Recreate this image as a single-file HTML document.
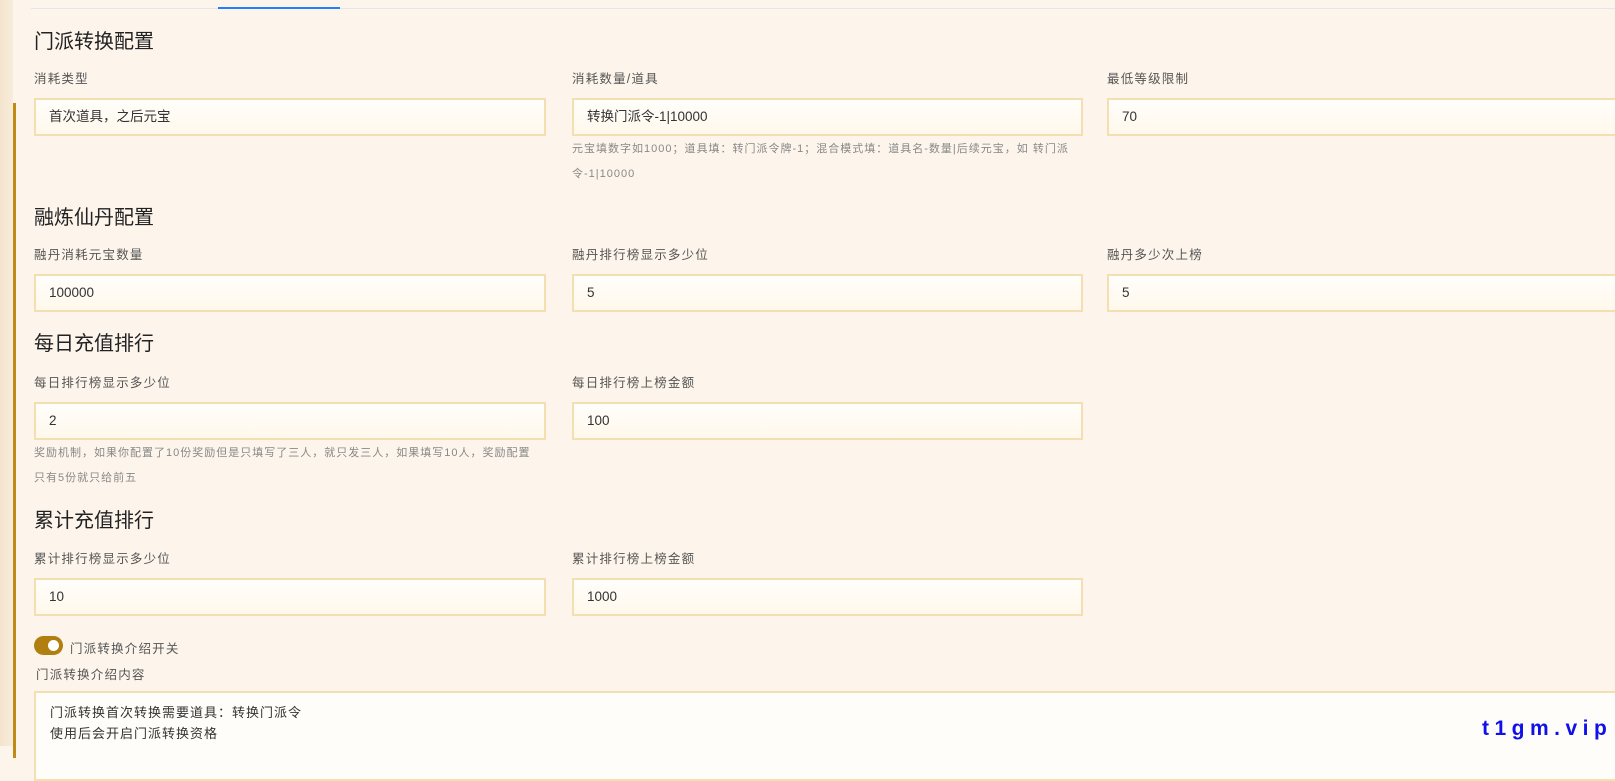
<!DOCTYPE html>
<html><head><meta charset="utf-8"><style>
*{box-sizing:border-box;margin:0;padding:0}
body{width:1615px;height:746px;overflow:hidden;background:#fdf5ec;font-family:"Liberation Sans","Noto Sans CJK SC",sans-serif;color:#333;position:relative}
.lb{position:absolute;left:0;top:0;width:13px;height:746px;background:linear-gradient(90deg,#f3e4cc,#f8ecdc)}
.gl{position:absolute;left:13px;top:103px;width:3px;height:655px;background:#c08a16}
.topline{position:absolute;left:31px;top:8px;right:0;height:1px;background:#e4e6ea}
.tab{position:absolute;left:218px;top:7px;width:122px;height:2px;background:#1e80ff}
.h{position:absolute;left:34px;font-size:20px;color:#222}
.l{position:absolute;font-size:12.5px;color:#555;letter-spacing:1.2px}
.i{position:absolute;height:38px;border:2px solid #f3dfb0;background:linear-gradient(#fffefb,#fff8ec);font-size:13.5px;color:#333;padding:0 13px;line-height:34px}
.hint{position:absolute;font-size:11px;color:#888;line-height:25px;letter-spacing:1px}
.c1{left:34px;width:512px}.c2{left:572px;width:511px}.c3{left:1107px;width:560px}
.tg{position:absolute;left:34px;top:636px;width:29px;height:19px;border-radius:10px;background:#b07f10}
.tg:after{content:"";position:absolute;right:4px;top:4px;width:11px;height:11px;border-radius:50%;background:#fff}
.wm{position:absolute;left:1482px;top:717px;font-size:21px;font-weight:bold;color:#1010e8;letter-spacing:5.5px;line-height:24px}
</style></head><body>
<div class="lb"></div><div class="gl"></div>
<div class="topline"></div><div class="tab"></div>

<div class="h" style="top:25px">门派转换配置</div>
<div class="l c1" style="top:68px">消耗类型</div>
<div class="l c2" style="top:68px">消耗数量/道具</div>
<div class="l c3" style="top:68px">最低等级限制</div>
<div class="i c1" style="top:98px">首次道具，之后元宝</div>
<div class="i c2" style="top:98px">转换门派令-1|10000</div>
<div class="i c3" style="top:98px">70</div>
<div class="hint c2" style="top:137px">元宝填数字如1000；道具填：转门派令牌-1；混合模式填：道具名-数量|后续元宝，如 转门派令-1|10000</div>

<div class="h" style="top:201px">融炼仙丹配置</div>
<div class="l c1" style="top:244px">融丹消耗元宝数量</div>
<div class="l c2" style="top:244px">融丹排行榜显示多少位</div>
<div class="l c3" style="top:244px">融丹多少次上榜</div>
<div class="i c1" style="top:274px">100000</div>
<div class="i c2" style="top:274px">5</div>
<div class="i c3" style="top:274px">5</div>

<div class="h" style="top:327px">每日充值排行</div>
<div class="l c1" style="top:372px">每日排行榜显示多少位</div>
<div class="l c2" style="top:372px">每日排行榜上榜金额</div>
<div class="i c1" style="top:402px">2</div>
<div class="i c2" style="top:402px">100</div>
<div class="hint c1" style="top:441px">奖励机制，如果你配置了10份奖励但是只填写了三人，就只发三人，如果填写10人，奖励配置<br>只有5份就只给前五</div>

<div class="h" style="top:504px">累计充值排行</div>
<div class="l c1" style="top:548px">累计排行榜显示多少位</div>
<div class="l c2" style="top:548px">累计排行榜上榜金额</div>
<div class="i c1" style="top:578px">10</div>
<div class="i c2" style="top:578px">1000</div>

<div class="tg"></div>
<div class="l" style="left:70px;top:638px">门派转换介绍开关</div>
<div class="l" style="left:36px;top:664px">门派转换介绍内容</div>
<div class="i" style="left:34px;top:691px;width:1600px;height:90px;line-height:21px;padding:9px 14px;font-size:13px;letter-spacing:1px;background:#fffdf9">门派转换首次转换需要道具：转换门派令<br>使用后会开启门派转换资格</div>
<div class="wm">t1gm.vip</div>
</body></html>
